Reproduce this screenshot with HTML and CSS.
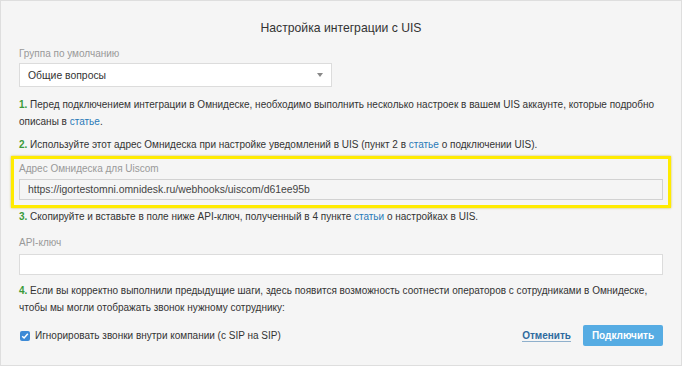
FILE: index.html
```html
<!DOCTYPE html>
<html lang="ru">
<head>
    <meta charset="UTF-8">
    <title>Настройка интеграции с UIS</title>
    <link rel="stylesheet" href="styles.css">
</head>
<body>
    <div class="modal">
        <h2 class="modal-title">Настройка интеграции с UIS</h2>

        <div class="field">
            <label class="field-label">Группа по умолчанию</label>
            <div class="select">
                <span>Общие вопросы</span>
                <span class="select-arrow"></span>
            </div>
        </div>

        <p class="step step-1"><b>1.</b> Перед подключением интеграции в Омнидеске, необходимо выполнить несколько настроек в вашем UIS аккаунте, которые подробно описаны в <a href="#">статье</a>.</p>

        <p class="step step-2"><b>2.</b> Используйте этот адрес Омнидеска при настройке уведомлений в UIS (пункт 2 в <a href="#">статье</a> о подключении UIS).</p>

        <div class="highlight">
            <label class="field-label">Адрес Омнидеска для Uiscom</label>
            <div class="input input-readonly">https://igortestomni.omnidesk.ru/webhooks/uiscom/d61ee95b</div>
        </div>

        <p class="step step-3"><b>3.</b> Скопируйте и вставьте в поле ниже API-ключ, полученный в 4 пункте <a href="#">статьи</a> о настройках в UIS.</p>

        <div class="field field-api">
            <label class="field-label">API-ключ</label>
            <div class="input"></div>
        </div>

        <p class="step step-4"><b>4.</b> Если вы корректно выполнили предыдущие шаги, здесь появится возможность соотнести операторов с сотрудниками в Омнидеске, чтобы мы могли отображать звонок нужному сотруднику:</p>

        <div class="footer">
            <label class="check">
                <span class="check-box">
                    <svg width="8" height="8" viewBox="0 0 8 8"><path d="M1.2 4.2 L3.1 6 L6.8 1.8" fill="none" stroke="#fff" stroke-width="1.5"/></svg>
                </span>
                Игнорировать звонки внутри компании (с SIP на SIP)
            </label>
            <div class="actions">
                <a href="#" class="cancel">Отменить</a>
                <button class="btn">Подключить</button>
            </div>
        </div>
    </div>
</body>
</html>
```

FILE: styles.css
```css
body {
    margin: 0;
    background-color: #ffffff;
    font-family: "Liberation Sans", Arial, sans-serif;
    color: #333;
}

.modal {
    width: 682px;
    height: 366px;
    background-color: #f5f5f5;
    border: 1px solid #dedede;
    padding: 18px 18px 0;
    box-sizing: border-box;
}

/* header */
.modal-title {
    margin: 0;
    font-size: 12.2px;
    font-weight: normal;
    text-align: center;
    line-height: 18px;
    color: #333;
}

.field-label {
    display: block;
    font-size: 10px;
    color: #999;
    line-height: 14px;
}

.field {
    margin-top: 10px;
}

.select {
    width: 313px;
    height: 24px;
    margin-top: 2px;
    background: #fff;
    border: 1px solid #dcdcdc;
    box-sizing: border-box;
    display: flex;
    align-items: center;
    justify-content: space-between;
    padding: 0 8px;
    font-size: 10.4px;
    color: #333;
}

.select-arrow {
    width: 0;
    height: 0;
    border-left: 3px solid transparent;
    border-right: 3px solid transparent;
    border-top: 4px solid #888;
}

/* steps */
.step {
    margin: 0;
    font-size: 10px;
    line-height: 17px;
    color: #333;
}

.step b {
    color: #3a9a3a;
}

.step a {
    color: #2a7ab8;
    text-decoration: none;
}

.step-1 {
    margin-top: 9px;
}

.step-2 {
    margin-top: 6px;
}

.step-3 {
    margin-top: 0;
}

.step-4 {
    margin-top: 7px;
}

.input {
    height: 21px;
    background: #fff;
    border: 1px solid #dcdcdc;
    box-sizing: border-box;
    margin-top: 3px;
    font-size: 10.4px;
    line-height: 19px;
    padding: 0 8px;
}

.highlight {
    margin: 3px -8px 0;
    padding: 3px 5px 5px;
    border: 3px solid #ffeb00;
    box-shadow: 0 0 2px rgba(190, 170, 0, 0.7);
}

.input-readonly {
    background: #f5f5f5;
    border-color: #d2d2d2;
    color: #444;
}

.field-api {
    margin-top: 11px;
}

.field-api .input {
    margin-top: 4px;
}

/* footer */
.footer {
    display: flex;
    align-items: center;
    justify-content: space-between;
    margin-top: 9px;
}

.check {
    display: flex;
    align-items: center;
    font-size: 10px;
    color: #333;
}

.check-box {
    width: 10px;
    height: 10px;
    background: #3d8ad6;
    border-radius: 2px;
    display: flex;
    align-items: center;
    justify-content: center;
    margin-right: 5px;
    margin-left: 1px;
}

.actions {
    display: flex;
    align-items: center;
}

.cancel {
    color: #2f6b9e;
    font-size: 10px;
    font-weight: bold;
    text-decoration: none;
    border-bottom: 1px solid #8fb0cc;
    margin-right: 12px;
}

.btn {
    width: 80px;
    height: 21px;
    border: none;
    border-radius: 2px;
    background: #56ace3;
    color: #fff;
    font-family: inherit;
    font-size: 10px;
    font-weight: bold;
    padding: 0;
}
```
